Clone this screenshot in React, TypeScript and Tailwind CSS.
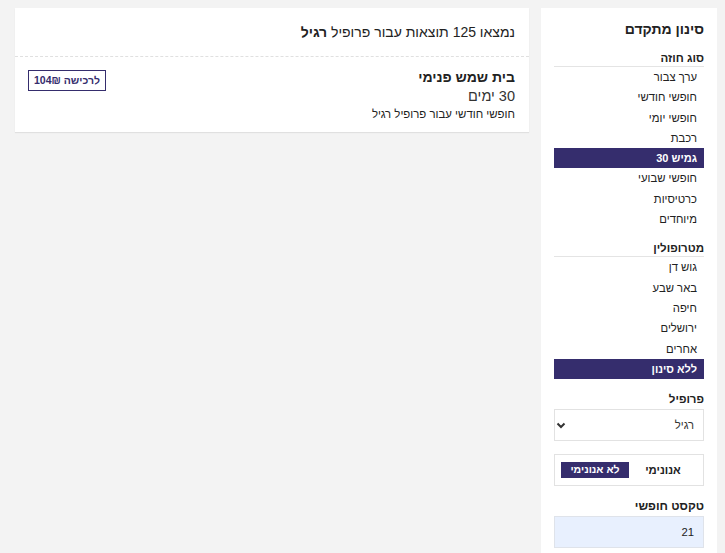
import React from 'react';

const PURPLE = 'bg-[#352d6d]';

interface FilterSectionProps {
  label: string;
  items: string[];
  selected: string;
  className?: string;
}

const FilterSection: React.FC<FilterSectionProps> = ({ label, items, selected, className }) => (
  <div className={className}>
    <div className="h-[17px] border-b border-[#e4e4e4] text-[11.5px] font-bold leading-[16px] text-[#222]">{label}</div>
    <ul>
      {items.map((item) => {
        const active = item === selected;
        return (
          <li
            key={item}
            className={
              active
                ? `${PURPLE} h-[20.3px] pr-[7px] text-[11px] font-bold leading-[20px] text-white`
                : 'h-[20.3px] pr-[7px] text-[11.3px] leading-[20px] text-[#222]'
            }
          >
            {item}
          </li>
        );
      })}
    </ul>
  </div>
);

const Sidebar: React.FC = () => (
  <aside className="w-[176px] shrink-0 self-stretch bg-white px-[13px] pt-[11px] pb-4">
    <h2 className="h-[20px] text-[14px] font-bold leading-[20px] text-[#222]">סינון מתקדם</h2>
    <FilterSection
      className="mt-[11px]"
      label="סוג חוזה"
      items={['ערך צבור', 'חופשי חודשי', 'חופשי יומי', 'רכבת', 'גמיש 30', 'חופשי שבועי', 'כרטיסיות', 'מיוחדים']}
      selected="גמיש 30"
    />
    <FilterSection
      className="mt-[11px]"
      label="מטרופולין"
      items={['גוש דן', 'באר שבע', 'חיפה', 'ירושלים', 'אחרים', 'ללא סינון']}
      selected="ללא סינון"
    />
    <div className="mt-[12px] text-[11.5px] font-bold leading-[16px] text-[#222]">פרופיל</div>
    <div className="mt-[2px] flex h-[32px] items-center justify-between border border-[#e2e2e2] pr-[9px] pl-0">
      <span className="text-[11.3px] text-[#333]">רגיל</span>
      <svg width="12" height="12" viewBox="0 0 12 12" fill="none">
        <path d="M2.5 4.5 6 8l3.5-3.5" stroke="#333" strokeWidth="2" />
      </svg>
    </div>
    <div className="mt-[13px] flex h-[32px] items-center border border-[#e2e2e2] px-[6px]">
      <span className="flex-1 text-center text-[11.3px] font-bold text-[#222]">אנונימי</span>
      <span className={`${PURPLE} flex h-[16px] w-[68px] items-center justify-center text-[10.5px] font-bold text-white`}>
        לא אנונימי
      </span>
    </div>
    <div className="mt-[12px] text-[12px] font-bold leading-[16px] text-[#222]">טקסט חופשי</div>
    <div className="mt-[2px] flex h-[32px] items-center border border-[#dfe3ea] bg-[#e8f0fe] pr-[9px] text-[11.3px] text-[#222]">
      21
    </div>
  </aside>
);

const ResultItem: React.FC = () => (
  <div className="flex items-start justify-between pt-[10px] pr-[14px] pb-[10px] pl-[13px]">
    <div>
      <div className="text-[14px] font-bold leading-[20px] text-[#222]">בית שמש פנימי</div>
      <div className="text-[14.5px] leading-[19px] text-[#333]">30 ימים</div>
      <div className="text-[11.4px] leading-[16px] text-[#222]">חופשי חודשי עבור פרופיל רגיל</div>
    </div>
    <button className="mt-[3px] h-[21px] border-[1.5px] border-[#352d6d] px-[5px] text-[10.5px] font-bold leading-[17px] text-[#352d6d]">
      לרכישה 104₪
    </button>
  </div>
);

export default function App() {
  return (
    <div
      dir="rtl"
      className="flex min-h-[553px] items-start gap-[12px] bg-[#f3f3f3] pt-[8px] pr-[8px] pl-[15px]"
      style={{ fontFamily: '"Liberation Sans", Arial, sans-serif' }}
    >
      <Sidebar />
      <main className="flex-1 bg-white shadow-[0_1px_1px_rgba(0,0,0,0.08)]">
        <div className="border-b border-dashed border-[#e0e0e0] pt-[14px] pr-[14px] pb-[14px] text-[14px] leading-[20px] text-[#222]">
          נמצאו 125 תוצאות עבור פרופיל <b>רגיל</b>
        </div>
        <ResultItem />
      </main>
    </div>
  );
}
